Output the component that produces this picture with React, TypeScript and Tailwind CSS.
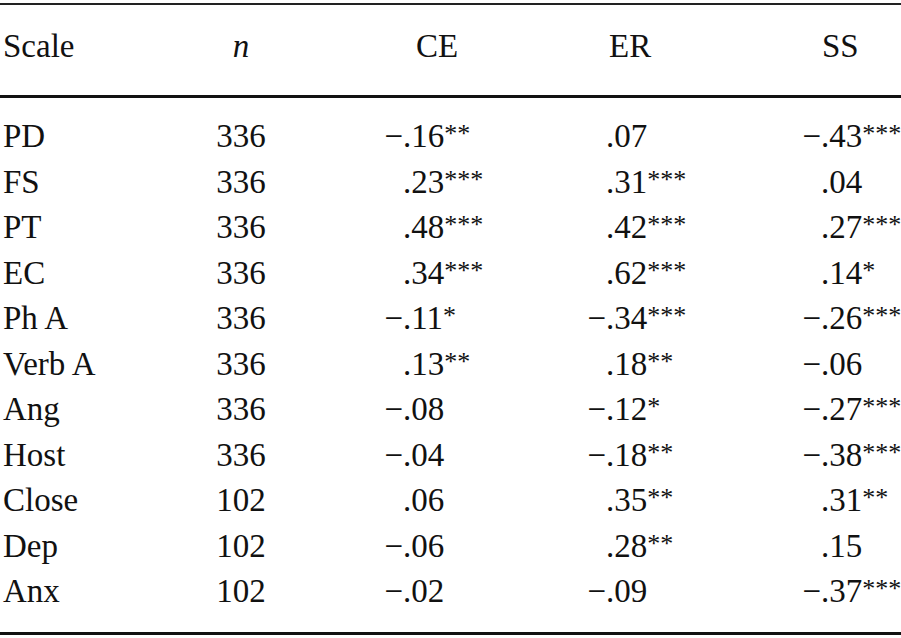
import React from "react";

type Row = {
  scale: string;
  n: string;
  ce: string;
  er: string;
  ss: string;
};

const rows: Row[] = [
  { scale: "PD", n: "336", ce: "−.16**", er: ".07", ss: "−.43***" },
  { scale: "FS", n: "336", ce: ".23***", er: ".31***", ss: ".04" },
  { scale: "PT", n: "336", ce: ".48***", er: ".42***", ss: ".27***" },
  { scale: "EC", n: "336", ce: ".34***", er: ".62***", ss: ".14*" },
  { scale: "Ph A", n: "336", ce: "−.11*", er: "−.34***", ss: "−.26***" },
  { scale: "Verb A", n: "336", ce: ".13**", er: ".18**", ss: "−.06" },
  { scale: "Ang", n: "336", ce: "−.08", er: "−.12*", ss: "−.27***" },
  { scale: "Host", n: "336", ce: "−.04", er: "−.18**", ss: "−.38***" },
  { scale: "Close", n: "102", ce: ".06", er: ".35**", ss: ".31**" },
  { scale: "Dep", n: "102", ce: "−.06", er: ".28**", ss: ".15" },
  { scale: "Anx", n: "102", ce: "−.02", er: "−.09", ss: "−.37***" },
];

// keeps the decimal points of a column lined up, stars set small and raised
function Value({ value, signWidth }: { value: string; signWidth: string }) {
  const negative = value.startsWith("−");
  const body = negative ? value.slice(1) : value;
  const stars = body.replace(/[^*]/g, "");
  const num = body.replace(/\*/g, "");
  return (
    <div className="flex whitespace-nowrap">
      <span className={`${signWidth} text-right`}>{negative ? "−" : ""}</span>
      <span>
        {num}
        {stars && (
          <span className="text-[26px] leading-none align-[5px]">{stars}</span>
        )}
      </span>
    </div>
  );
}

export default function App() {
  return (
    <div className="w-[901px] h-[638px] overflow-hidden bg-white text-[#111] font-['Liberation_Serif','Times_New_Roman',serif] text-[33px] leading-[46px] pt-[3px]">
      <div className="border-t-2 border-[#222]" />
      <div className="grid grid-cols-[178px_120px_261px_215px_1fr] pl-[3px] pt-[18px] pb-[26px]">
        <div>Scale</div>
        <div className="text-center italic">n</div>
        <div className="pl-[115px]">CE</div>
        <div className="pl-[47px]">ER</div>
        <div className="pl-[45px]">SS</div>
      </div>
      <div className="border-t-[3px] border-[#111]" />
      <div className="pt-[16px] pb-[17px] leading-[45.5px]">
        {rows.map((row, idx) => {
          return (
            <div
              key={idx}
              className="grid grid-cols-[178px_120px_261px_215px_1fr] pl-[3px]"
            >
              <div>{row.scale}</div>
              <div className="text-center">{row.n}</div>
              <Value value={row.ce} signWidth="w-[102px]" />
              <Value value={row.er} signWidth="w-[44px]" />
              <Value value={row.ss} signWidth="w-[44px]" />
            </div>
          );
        })}
      </div>
      <div className="border-t-[3px] border-[#111]" />
    </div>
  );
}
